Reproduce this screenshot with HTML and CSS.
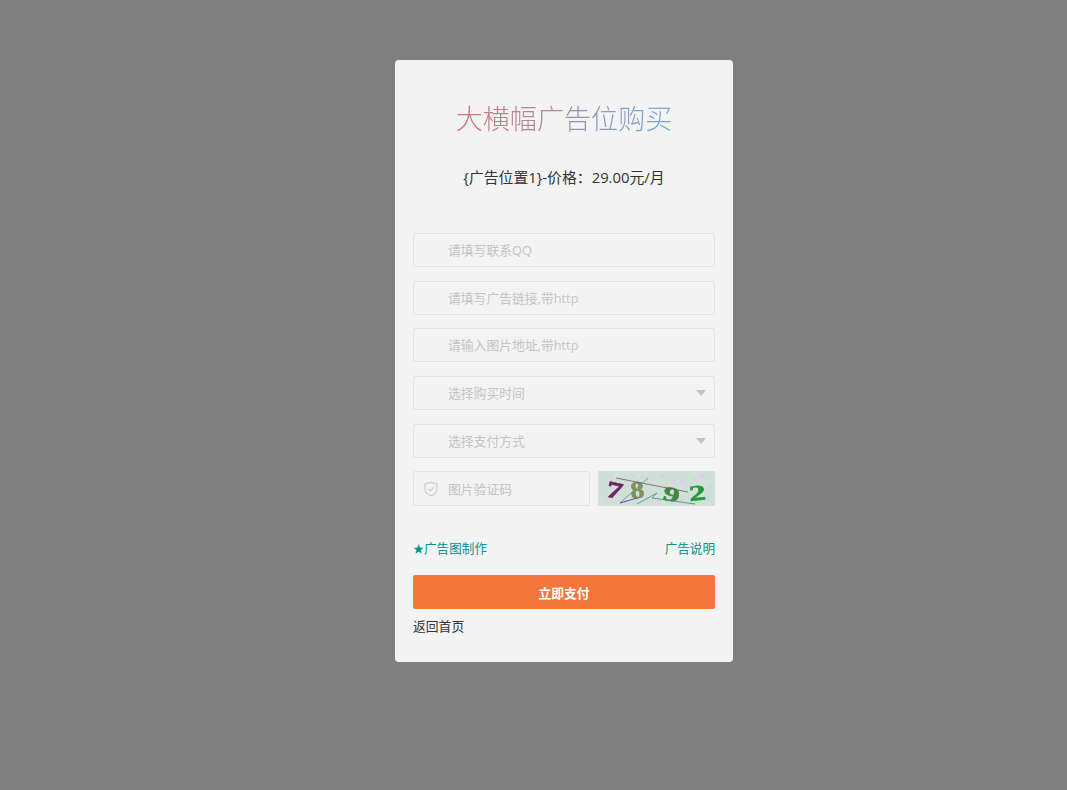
FILE: index.html
```html
<!DOCTYPE html>
<html lang="en">
<head>
    <meta charset="UTF-8">
    <meta name="viewport" content="width=device-width, initial-scale=1.0">
    <title>大横幅广告位购买</title>
    <link rel="stylesheet" href="styles.css">
</head>
<body>

<div class="card">
    <h2 class="title"><span>大横幅广告位购买</span></h2>
    <p class="price">{广告位置1}-价格：29.00元/月</p>

    <form class="buy-form">
        <div class="field"><input type="text" placeholder="请填写联系QQ"></div>
        <div class="field"><input type="text" placeholder="请填写广告链接,带http"></div>
        <div class="field"><input type="text" placeholder="请输入图片地址,带http"></div>

        <div class="field field-select">
            <select>
                <option>选择购买时间</option>
            </select>
            <i class="arrow"></i>
        </div>
        <div class="field field-select">
            <select>
                <option>选择支付方式</option>
            </select>
            <i class="arrow"></i>
        </div>

        <!-- Captcha row -->
        <div class="captcha-row">
            <div class="field field-code">
                <svg class="shield" viewBox="0 0 16 16" width="16" height="16">
                    <path d="M8 1.2 L14 3.1 V8 C14 11 11 13.6 8 14.8 C5 13.6 2 11 2 8 V3.1 Z" fill="none" stroke="#cfcfcf" stroke-width="1.2" stroke-linejoin="round"/>
                    <path d="M5.3 7.8 L7.4 9.9 L10.9 6.2" fill="none" stroke="#cfcfcf" stroke-width="1.2"/>
                </svg>
                <input type="text" placeholder="图片验证码">
            </div>
            <svg class="captcha" viewBox="0 0 117 35" width="117" height="35">
                <rect width="117" height="35" fill="#cfe0d8"/>
                <g fill="#dcd0e8">
                    <circle cx="6" cy="14" r="1.5"/><circle cx="12" cy="5" r="2"/><circle cx="24" cy="9" r="1.5"/>
                    <circle cx="34" cy="5" r="2.5"/><circle cx="44" cy="6" r="2"/><circle cx="54" cy="10" r="1.5"/>
                    <circle cx="64" cy="5" r="3"/><circle cx="76" cy="9" r="2"/><circle cx="84" cy="11" r="2.5"/>
                    <circle cx="96" cy="8" r="2"/><circle cx="104" cy="5" r="3"/><circle cx="112" cy="15" r="2"/>
                    <circle cx="110" cy="28" r="2"/><circle cx="26" cy="28" r="2"/><circle cx="8" cy="31" r="2"/>
                    <circle cx="60" cy="31" r="2"/><circle cx="82" cy="30" r="2.5"/><circle cx="90" cy="14" r="2"/>
                </g>
                <g fill="#e6e6cc">
                    <circle cx="18" cy="4" r="1.5"/><circle cx="58" cy="14" r="1.5"/><circle cx="72" cy="13" r="1.5"/>
                    <circle cx="16" cy="25" r="1.5"/><circle cx="100" cy="30" r="1.5"/>
                </g>
                <g font-family="'Liberation Serif', serif" font-weight="bold" font-size="24" text-anchor="middle" stroke-width="0.6">
                    <text transform="translate(15 27) rotate(12) scale(1.35 0.98)" fill="#6e2460" stroke="#6e2460">7</text>
                    <text transform="translate(40 27) rotate(-6) scale(1.15 1)" fill="#87905a" stroke="#87905a">8</text>
                    <text transform="translate(72 30) rotate(14) scale(1.4 0.85)" fill="#3f8a3f" stroke="#3f8a3f">9</text>
                    <text transform="translate(100 29) rotate(-6) scale(1.4 0.9)" fill="#1f9a3a" stroke="#1f9a3a">2</text>
                </g>
                <g fill="none" stroke-width="0.8">
                    <path d="M18 7 L90 21" stroke="#76505e"/>
                    <path d="M50 7 L22 32" stroke="#4f9a9a"/>
                    <path d="M39 33 L59 22 L54 27 L97 33" stroke="#3f8f78"/>
                    <path d="M22 32 L39 27" stroke="#3a2a80"/>
                </g>
            </svg>
        </div>

        <div class="link-row">
            <a href="#"><span class="star">★</span>广告图制作</a>
            <a href="#">广告说明</a>
        </div>

        <button type="button" class="pay-btn">立即支付</button>
        <a href="#" class="back-link">返回首页</a>
    </form>
</div>

</body>
</html>
```

FILE: styles.css
```css
/* General styles */
body {
    font-family: "Open Sans", "Noto Sans CJK SC", sans-serif;
    background-color: #808080;
    margin: 0;
    padding: 60px 0 0 61px;
    font-size: 12.8px;
    color: #333;
}

.card {
    width: 338px;
    height: 602px;
    box-sizing: border-box;
    margin: 0 auto;
    padding: 38px 18px 0;
    background-color: #f3f3f3;
    border-radius: 4px;
}

/* Title */
.title {
    margin: 0;
    text-align: center;
    font-size: 27.1px;
    font-weight: 300;
    line-height: 42px;
}

.title span {
    display: inline-block;
    background: linear-gradient(to right, #d27472, #6faadb);
    -webkit-background-clip: text;
    background-clip: text;
    color: transparent;
}

.price {
    margin: 0;
    padding-top: 27px;
    text-align: center;
    font-size: 14.85px;
    line-height: 20px;
    color: #333;
}

.buy-form {
    display: block;
    padding-top: 46px;
}

/* Inputs */
.field {
    position: relative;
    display: flex;
    align-items: center;
    height: 34px;
    box-sizing: border-box;
    margin-bottom: 13.67px;
    background-color: #f3f3f3;
    border: 1px solid #e3e3e3;
    border-radius: 2px;
}

.field input,
.field select {
    flex: 1;
    width: 100%;
    height: 100%;
    min-width: 0;
    box-sizing: border-box;
    padding: 0 0 0 34px;
    border: none;
    outline: none;
    background: transparent;
    font-family: inherit;
    font-size: 12.8px;
    color: #c4c4c4;
    appearance: none;
    -webkit-appearance: none;
}

.field input::placeholder {
    color: #c4c4c4;
    opacity: 1;
}

.arrow {
    position: absolute;
    right: 8px;
    top: 13px;
    width: 0;
    height: 0;
    border-left: 5.5px solid transparent;
    border-right: 5.5px solid transparent;
    border-top: 6px solid #c4c4c4;
}

/* Captcha */
.captcha-row {
    display: flex;
    justify-content: space-between;
    align-items: flex-start;
}

.field-code {
    width: 176.5px;
    height: 35px;
    margin-bottom: 0;
}

.shield {
    position: absolute;
    left: 9px;
    top: 9px;
}

.captcha {
    display: block;
    width: 117px;
    height: 35px;
    filter: blur(0.4px);
}

/* Links and button */
.link-row {
    display: flex;
    justify-content: space-between;
    margin-top: 33px;
    font-size: 12.6px;
    line-height: 20px;
}

.link-row a {
    color: #009688;
    text-decoration: none;
}

.star {
    font-size: 11px;
}

.pay-btn {
    display: block;
    width: 100%;
    height: 34px;
    margin-top: 16px;
    border: none;
    border-radius: 2px;
    background-color: #f5763b;
    color: white;
    font-family: inherit;
    font-size: 12.8px;
    font-weight: bold;
    cursor: pointer;
}

.back-link {
    display: block;
    margin-top: 7px;
    line-height: 20px;
    color: #333;
    text-decoration: none;
}
```
